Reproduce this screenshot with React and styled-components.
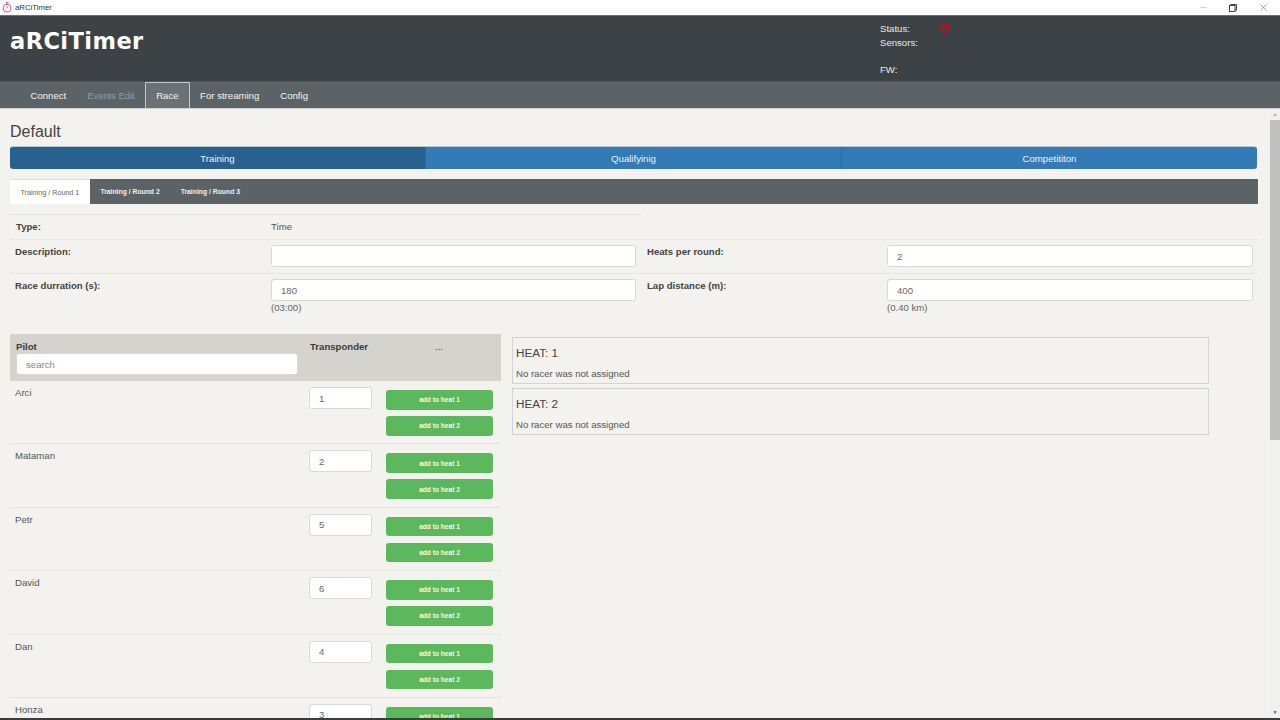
import React from "react";
import styled, { createGlobalStyle } from "styled-components";
import { Minus, X } from "lucide-react";

const Global = createGlobalStyle`
  html, body { margin: 0; padding: 0; height: 100%; overflow: hidden; }
  body { font-family: "Liberation Sans", Arial, sans-serif; font-size: 9.6px; color: #555; background: #f3f2ee; }
  * { box-sizing: border-box; }
`;

const Page = styled.div`
  width: 1280px;
  height: 720px;
  display: flex;
  flex-direction: column;
  overflow: hidden;
  border-bottom: 2px solid #3a3d40;
`;

const TitleBar = styled.div`
  height: 15px;
  flex: none;
  background: #fff;
  display: flex;
  align-items: center;
  padding-left: 2px;
  color: #333;
  font-size: 7.8px;
  gap: 3px;
`;

const WindowButtons = styled.div`
  margin-left: auto;
  padding-right: 2px;
  display: flex;
  color: #444;
`;

const WindowButton = styled.div`
  width: 30px;
  height: 15px;
  display: flex;
  align-items: center;
  justify-content: center;
  color: ${(p) => p.$color || "#444"};
`;

const Header = styled.header`
  height: 66px;
  flex: none;
  background: #3d4246;
  border-top: 1px solid #6d7073;
  display: flex;
  justify-content: space-between;
`;

const Logo = styled.div`
  font-family: "DejaVu Sans", sans-serif;
  font-size: 22.5px;
  font-weight: 700;
  letter-spacing: 0.45px;
  color: #fff;
  padding: 12px 0 0 10px;
`;

const Status = styled.div`
  width: 400px;
  padding-top: 5px;
  color: #e8e8e8;
`;

const StatusRow = styled.div`
  height: ${(p) => (p.$tall ? "26px" : "14px")};
  display: flex;
  align-items: ${(p) => (p.$tall ? "flex-end" : "center")};
`;

const StatusLabel = styled.span`
  width: 60px;
`;

const Nav = styled.nav`
  height: 28px;
  flex: none;
  background: #5b6366;
  border-top: 1px solid #51585b;
  border-bottom: 1px solid #cfd0cf;
  display: flex;
  padding-left: 20px;
`;

const NavItem = styled.div`
  padding: 0 ${(p) => (p.$active ? "10px" : "10.5px")};
  display: flex;
  align-items: center;
  letter-spacing: ${(p) => (p.$disabled ? "-0.1px" : "0")};
  color: ${(p) => (p.$disabled ? "#86a0a8" : "#f2f2f2")};
  background: ${(p) => (p.$active ? "#6b7175" : "transparent")};
  border: ${(p) => (p.$active ? "1px solid #c5c8c9" : "none")};
  border-bottom: none;
`;

const Body = styled.div`
  flex: 1;
  min-height: 0;
  display: flex;
`;

const Main = styled.main`
  flex: 1;
  min-width: 0;
  padding: 14px 10px 0;
  overflow: hidden;
`;

const Scrollbar = styled.div`
  width: 10px;
  flex: none;
  background: #f0f0f0;
  display: flex;
  flex-direction: column;
  align-items: center;
`;

const ScrollArrow = styled.div`
  height: 11px;
  font-size: 5px;
  color: ${(p) => p.$color};
  line-height: 11px;
  margin-top: ${(p) => (p.$end ? "auto" : "0")};
`;

const ScrollThumb = styled.div`
  width: 100%;
  height: 320px;
  background: #c0c0c0;
`;

const Title = styled.h1`
  margin: 0 0 6px;
  font-size: 16px;
  line-height: 17px;
  font-weight: 400;
  color: #444;
`;

const Tabs = styled.div`
  width: 1247px;
  height: 23px;
  display: flex;
  border-radius: 3px;
  overflow: hidden;
  border-top: 1px solid #b9c6d0;
`;

const Tab = styled.div`
  flex: 1;
  display: flex;
  align-items: center;
  justify-content: center;
  color: #eef3f7;
  background: ${(p) => (p.$active ? "#286090" : "#337ab7")};
  border-left: ${(p) => (p.$first ? "none" : "1px solid #2e6da4")};
`;

const RoundBar = styled.div`
  width: 1248px;
  height: 25px;
  margin-top: 10px;
  background: #5b6366;
  display: flex;
`;

const Round = styled.div`
  padding: 0 10.5px;
  display: flex;
  align-items: center;
  font-size: ${(p) => (p.$active ? "7.2px" : "6.8px")};
  font-weight: ${(p) => (p.$active ? 400 : 700)};
  color: ${(p) => (p.$active ? "#666" : "#f0f0f0")};
  background: ${(p) => (p.$active ? "#fff" : "transparent")};
  border-top: ${(p) => (p.$active ? "1px solid #ddd" : "none")};
`;

const TypeRow = styled.div`
  width: 631px;
  height: 25px;
  margin-top: 10px;
  border-top: 1px solid #e2e1dd;
  display: grid;
  grid-template-columns: 255px 1fr;
  align-items: center;
  padding: 0 0 2px 6px;
`;

const Row = styled.div`
  width: 1248px;
  border-top: 1px solid #e8e7e3;
  display: grid;
  grid-template-columns: 256px 371px 245px 1fr;
  padding: 5px 0 0 5px;
  height: ${(p) => p.$h}px;
`;

const Label = styled.div`
  font-weight: 700;
  color: #444;
  padding-top: 1px;
  padding-left: ${(p) => p.$left || 0}px;
`;

const Field = styled.div`
  padding-right: ${(p) => p.$right || 0}px;
`;

const Input = styled.div`
  height: 22px;
  background: #fff;
  border: 1px solid #d8d8d4;
  border-radius: 3px;
  padding: 0 9px;
  display: flex;
  align-items: center;
  color: #666;
  width: ${(p) => p.$w || "100%"};
`;

const Hint = styled.div`
  margin-top: 1px;
  color: #666;
`;

const Columns = styled.div`
  margin-top: 12px;
  display: flex;
  gap: 11px;
`;

const PilotTable = styled.div`
  width: 491px;
  flex: none;
`;

const TableHead = styled.div`
  height: 47px;
  background: #d4d3ce;
  display: grid;
  grid-template-columns: 294px 125px 1fr;
  padding: 7px 0 0 6px;
  font-weight: 700;
  color: #3f3a3a;
`;

const HeadDots = styled.div`
  font-weight: 400;
`;

const Search = styled(Input)`
  width: 282px;
  margin-top: 1px;
  color: #888;
  font-weight: 400;
`;

const PilotRow = styled.div`
  height: 63.4px;
  border-bottom: 1px solid #e4e3df;
  display: grid;
  grid-template-columns: 294px 77px 107px;
  padding: 6px 0 0 5px;
`;

const PilotName = styled.div`
  color: #555;
`;

const Actions = styled.div`
  display: flex;
  flex-direction: column;
  gap: 6.5px;
  padding-top: 3px;
`;

const AddButton = styled.div`
  height: 19.5px;
  background: #5cb85c;
  border-radius: 3px;
  color: #f2f8f0;
  font-size: 6.6px;
  font-weight: 700;
  display: flex;
  align-items: center;
  justify-content: center;
`;

const Heats = styled.div`
  width: 697px;
  padding-top: 3px;
  display: flex;
  flex-direction: column;
  gap: 4px;
`;

const Heat = styled.div`
  height: 47px;
  border: 1px solid #cfd5d6;
  padding: 8px 3px 0;
`;

const HeatTitle = styled.div`
  font-size: 11.7px;
  color: #444;
  margin-bottom: 9px;
`;

const pilots = [
  ["Arci", 1],
  ["Mataman", 2],
  ["Petr", 5],
  ["David", 6],
  ["Dan", 4],
  ["Honza", 3],
];

function TimerIcon() {
  return (
    <svg width="10" height="11" viewBox="0 0 10 11" fill="none" stroke="#e0559a" strokeWidth="1">
      <circle cx="5" cy="6.2" r="3.9" />
      <path d="M3.5 .6h3M5 .6v1.5M5 4.4v2" />
    </svg>
  );
}

function RestoreIcon() {
  return (
    <svg width="8" height="8" viewBox="0 0 8 8" fill="none" stroke="#444" strokeWidth="1">
      <rect x=".5" y="1.5" width="5.5" height="6" />
      <path d="M1.8 1.5V.5h5.7v5.7H6" />
    </svg>
  );
}

function StatusIcon() {
  return (
    <svg width="10" height="10" viewBox="0 0 10 10" fill="none" stroke="#e60012">
      <circle cx="5" cy="5" r="4.2" strokeWidth="1.4" />
      <path d="M3.5 3.5l3 3M6.5 3.5l-3 3" strokeWidth="1.2" />
    </svg>
  );
}

export default function App() {
  return (
    <Page>
      <Global />
      <TitleBar>
        <TimerIcon />
        aRCiTimer
        <WindowButtons>
          <WindowButton $color="#999"><Minus size={9} strokeWidth={1.2} /></WindowButton>
          <WindowButton><RestoreIcon /></WindowButton>
          <WindowButton><X size={11} strokeWidth={1} /></WindowButton>
        </WindowButtons>
      </TitleBar>
      <Header>
        <Logo>aRCiTimer</Logo>
        <Status>
          <StatusRow><StatusLabel>Status:</StatusLabel><StatusIcon /></StatusRow>
          <StatusRow>Sensors:</StatusRow>
          <StatusRow $tall>FW:</StatusRow>
        </Status>
      </Header>
      <Nav>
        <NavItem>Connect</NavItem>
        <NavItem $disabled>Events Edit</NavItem>
        <NavItem $active>Race</NavItem>
        <NavItem>For streaming</NavItem>
        <NavItem>Config</NavItem>
      </Nav>
      <Body>
        <Main>
          <Title>Default</Title>
          <Tabs>
            <Tab $active $first>Training</Tab>
            <Tab>Qualifyinig</Tab>
            <Tab>Competititon</Tab>
          </Tabs>
          <RoundBar>
            <Round $active>Training / Round 1</Round>
            <Round>Training / Round 2</Round>
            <Round>Training / Round 3</Round>
          </RoundBar>
          <TypeRow>
            <Label>Type:</Label>
            <div>Time</div>
          </TypeRow>
          <Row $h={34}>
            <Label>Description:</Label>
            <Field $right={6}><Input /></Field>
            <Label $left={5}>Heats per round:</Label>
            <Field $right={5}><Input>2</Input></Field>
          </Row>
          <Row $h={49}>
            <Label>Race durration (s):</Label>
            <Field $right={6}>
              <Input>180</Input>
              <Hint>(03:00)</Hint>
            </Field>
            <Label $left={5}>Lap distance (m):</Label>
            <Field $right={5}>
              <Input>400</Input>
              <Hint>(0.40 km)</Hint>
            </Field>
          </Row>
          <Columns>
            <PilotTable>
              <TableHead>
                <div>
                  Pilot
                  <Search>search</Search>
                </div>
                <div>Transponder</div>
                <HeadDots>...</HeadDots>
              </TableHead>
              {pilots.map(([name, num]) => (
                <PilotRow key={name}>
                  <PilotName>{name}</PilotName>
                  <Input $w="63px">{num}</Input>
                  <Actions>
                    <AddButton>add to heat 1</AddButton>
                    <AddButton>add to heat 2</AddButton>
                  </Actions>
                </PilotRow>
              ))}
            </PilotTable>
            <Heats>
              <Heat>
                <HeatTitle>HEAT: 1</HeatTitle>
                No racer was not assigned
              </Heat>
              <Heat>
                <HeatTitle>HEAT: 2</HeatTitle>
                No racer was not assigned
              </Heat>
            </Heats>
          </Columns>
        </Main>
        <Scrollbar>
          <ScrollArrow $color="#a8a8a8">▲</ScrollArrow>
          <ScrollThumb />
          <ScrollArrow $end $color="#505050">▼</ScrollArrow>
        </Scrollbar>
      </Body>
    </Page>
  );
}
